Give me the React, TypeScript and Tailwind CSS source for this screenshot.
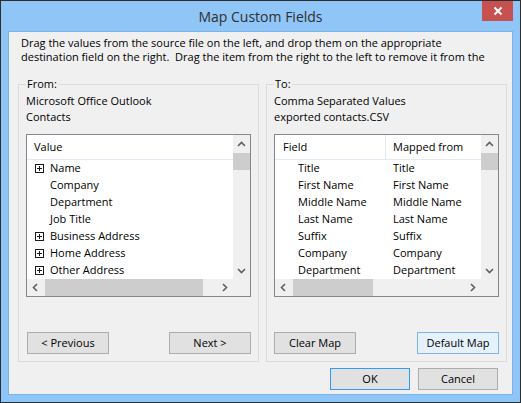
// "Map Custom Fields" dialog (Windows 8 style): source list on the left,
// destination mapping on the right, OK / Cancel underneath.

import type { ReactNode } from 'react';

const SOURCE_ROWS = [
  { label: 'Name', expandable: true },
  { label: 'Company', expandable: false },
  { label: 'Department', expandable: false },
  { label: 'Job Title', expandable: false },
  { label: 'Business Address', expandable: true },
  { label: 'Home Address', expandable: true },
  { label: 'Other Address', expandable: true },
];

const MAPPED_ROWS: [string, string][] = [
  ['Title', 'Title'],
  ['First Name', 'First Name'],
  ['Middle Name', 'Middle Name'],
  ['Last Name', 'Last Name'],
  ['Suffix', 'Suffix'],
  ['Company', 'Company'],
  ['Department', 'Department'],
];

type Dir = 'up' | 'down' | 'left' | 'right';

const CHEVRON_POINTS: Record<Dir, string> = {
  up: '1,6 4.5,2.5 8,6',
  down: '1,3 4.5,6.5 8,3',
  left: '6,1 2.5,4.5 6,8',
  right: '3,1 6.5,4.5 3,8',
};

function Chevron({ dir }: { dir: Dir }) {
  return (
    <svg width="9" height="9" viewBox="0 0 9 9">
      <polyline points={CHEVRON_POINTS[dir]} fill="none" stroke="#606060" strokeWidth="1.6" />
    </svg>
  );
}

function PlusBox() {
  return (
    <svg width="9" height="9" viewBox="0 0 9 9" className="block">
      <rect x="0.5" y="0.5" width="8" height="8" fill="white" stroke="#1a1a1a" />
      <path d="M2 4.5h5M4.5 2v5" stroke="#1a1a1a" />
    </svg>
  );
}

function ListBox({ header, thumbWidth, children }: { header: ReactNode; thumbWidth: number; children: ReactNode }) {
  return (
    <div className="flex h-[163px] w-[225px] flex-col border border-[#828790] bg-white">
      <div className="flex min-h-0 flex-1">
        <div className="min-w-0 flex-1 overflow-hidden">
          <div className="flex h-[25px] border-b border-[#e2ebf5]">{header}</div>
          {children}
        </div>
        <div className="flex w-[17px] flex-col bg-[#f0f0f0]">
          <div className="flex h-[18px] items-center justify-center">
            <Chevron dir="up" />
          </div>
          <div className="h-[17px] bg-[#cdcdcd]" />
          <div className="flex-1" />
          <div className="flex h-[17px] items-center justify-center">
            <Chevron dir="down" />
          </div>
        </div>
      </div>
      <div className="flex h-[17px] bg-[#f0f0f0]">
        <div className="flex w-[17px] items-center justify-center">
          <Chevron dir="left" />
        </div>
        <div className="ml-px h-full bg-[#cdcdcd]" style={{ width: thumbWidth }} />
        <div className="flex-1" />
        <div className="flex w-[17px] items-center justify-center">
          <Chevron dir="right" />
        </div>
        <div className="w-[17px]" />
      </div>
    </div>
  );
}

function Button({ children, tone = 'plain', className = '' }: { children: ReactNode; tone?: 'plain' | 'default' | 'hover'; className?: string }) {
  const look =
    tone === 'default'
      ? 'border-[#3399ff] bg-[#e1e1e1]'
      : tone === 'hover'
        ? 'border-[#7eb4ea] bg-[#e5f1fb]'
        : 'border-[#adadad] bg-[#e1e1e1]';
  return (
    <button type="button" className={`flex h-[22px] items-center justify-center border ${look} ${className}`}>
      {children}
    </button>
  );
}

function Group({ legend, lines, list, buttons }: { legend: string; lines: string[]; list: ReactNode; buttons: ReactNode }) {
  return (
    <fieldset className="h-[286px] w-[241px] border border-[#dcdcdc] px-[7px] pb-[7px]">
      <legend className="px-px leading-[16px]">{legend}</legend>
      <div className="pt-px leading-[16px]">
        {lines.map((l) => (
          <div key={l}>{l}</div>
        ))}
      </div>
      <div className="mt-[9px]">{list}</div>
      <div className="mt-[35px] flex justify-between">{buttons}</div>
    </fieldset>
  );
}

export default function App() {
  return (
    <div className="relative flex h-[403px] w-[521px] flex-col border border-[#2e2e2e] bg-[#8fc6f7] font-['Open_Sans',sans-serif] text-[11px] text-black">
      <div className="flex h-[30px] items-center justify-center text-[14px] text-[#2f2f2f]">Map Custom Fields</div>
      <button
        type="button"
        className="absolute right-[7px] top-0 flex h-[20px] w-[31px] items-center justify-center bg-[#c75050]"
      >
        <svg width="10" height="10" viewBox="0 0 10 10">
          <path d="M1.5 1.5l7 7M8.5 1.5l-7 7" stroke="white" strokeWidth="2" />
        </svg>
      </button>

      <div className="mx-[7px] mb-[7px] flex flex-1 flex-col border border-[#7ab3e8] bg-[#f0f0f0]">
        <div className="h-[44px] overflow-hidden whitespace-pre pl-[12px] pt-[4px] leading-[14px]">
          <div>Drag the values from the source file on the left, and drop them on the appropriate</div>
          <div>destination field on the right.  Drag the item from the right to the left to remove it from the</div>
        </div>

        <div className="flex gap-[7px] pl-[9px]">
          <Group
            legend="From:"
            lines={['Microsoft Office Outlook', 'Contacts']}
            list={
              <ListBox thumbWidth={158} header={<div className="flex items-center pl-[7px]">Value</div>}>
                {SOURCE_ROWS.map((row) => (
                  <div key={row.label} className="flex h-[17px] items-center whitespace-nowrap">
                    <div className="w-[23px] pl-[8px]">{row.expandable && <PlusBox />}</div>
                    {row.label}
                  </div>
                ))}
              </ListBox>
            }
            buttons={
              <>
                <Button className="ml-px w-[82px]">&lt; Previous</Button>
                <Button className="w-[82px]">Next &gt;</Button>
              </>
            }
          />
          <Group
            legend="To:"
            lines={['Comma Separated Values', 'exported contacts.CSV']}
            list={
              <ListBox
                thumbWidth={80}
                header={
                  <>
                    <div className="flex w-[111px] shrink-0 items-center border-r border-[#e2ebf5] pl-[8px]">Field</div>
                    <div className="flex items-center whitespace-nowrap pl-[7px]">Mapped from</div>
                  </>
                }
              >
                {MAPPED_ROWS.map(([field, from]) => (
                  <div key={field} className="flex h-[17px] items-center whitespace-nowrap">
                    <div className="w-[118px] shrink-0 pl-[23px]">{field}</div>
                    <div>{from}</div>
                  </div>
                ))}
              </ListBox>
            }
            buttons={
              <>
                <Button className="w-[82px]">Clear Map</Button>
                <Button tone="hover" className="w-[82px]">
                  Default Map
                </Button>
              </>
            }
          />
        </div>

        <div className="mt-[6px] flex justify-end gap-[8px] pr-[14px]">
          <Button tone="default" className="w-[80px]">
            OK
          </Button>
          <Button className="w-[80px]">Cancel</Button>
        </div>
      </div>
    </div>
  );
}
